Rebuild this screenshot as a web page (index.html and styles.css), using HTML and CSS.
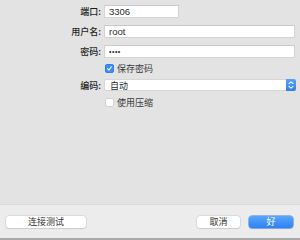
FILE: index.html
```html
<!DOCTYPE html>
<html lang="zh-CN">
<head>
    <meta charset="UTF-8">
    <title>连接设置</title>
    <link rel="stylesheet" href="styles.css">
</head>
<body>
    <div class="sheet">
        <div class="form">
            <div class="row row-port">
                <label class="label">端口:</label>
                <input class="field field-short" type="text" value="3306">
            </div>
            <div class="row">
                <label class="label">用户名:</label>
                <input class="field" type="text" value="root">
            </div>
            <div class="row">
                <label class="label">密码:</label>
                <input class="field field-pass" type="text" value="••••">
            </div>
            <div class="row row-check">
                <span class="label"></span>
                <span class="check checked">
                    <svg viewBox="0 0 9 9" width="9" height="9"><path d="M2 4.6 L3.8 6.6 L7 2.2" fill="none" stroke="#fff" stroke-width="1.3" stroke-linecap="round" stroke-linejoin="round"/></svg>
                </span>
                <span class="check-text">保存密码</span>
            </div>
            <div class="row row-select">
                <label class="label">编码:</label>
                <div class="select">
                    <span class="select-value">自动</span>
                    <span class="stepper">
                        <svg viewBox="0 0 10 12" width="10" height="12"><path d="M3 4.6 L5 2.8 L7 4.6 M3 7.4 L5 9.2 L7 7.4" fill="none" stroke="#fff" stroke-width="1.1" stroke-linecap="round" stroke-linejoin="round"/></svg>
                    </span>
                </div>
            </div>
            <div class="row row-check row-check2">
                <span class="label"></span>
                <span class="check"></span>
                <span class="check-text">使用压缩</span>
            </div>
        </div>
        <div class="footer">
            <button class="btn btn-test">连接测试</button>
            <div class="footer-right">
                <button class="btn btn-cancel">取消</button>
                <button class="btn btn-ok">好</button>
            </div>
        </div>
    </div>
</body>
</html>
```
FILE: styles.css
```css
body {
    margin: 0;
    background-color: #e3e3e3;
    font-family: "Liberation Sans", "Noto Sans CJK SC", sans-serif;
    font-size: 10px;
    color: #2b2b2b;
}
.sheet {
    height: 240px;
    display: flex;
    flex-direction: column;
    box-sizing: border-box;
}
.form {
    flex: 1;
    padding-top: 5px;
    display: flex;
    flex-direction: column;
}
.row {
    display: flex;
    align-items: center;
    height: 13px;
    margin-bottom: 7px;
}
.label {
    width: 101px;
    padding-right: 3px;
    text-align: right;
    flex-shrink: 0;
    font-family: "Noto Sans CJK SC", sans-serif;
    font-size: 9px;
    font-weight: 500;
    color: #1e1e1e;
}
.field {
    box-sizing: border-box;
    width: 191px;
    height: 13px;
    margin: 0;
    padding: 0 4px;
    border: 1px solid #d4d4d4;
    border-top-color: #c8c8c8;
    background: #fff;
    font-family: "Liberation Sans", sans-serif;
    font-size: 9.5px;
    color: #2b2b2b;
    outline: none;
}
.field-short {
    width: 75px;
}
.field-pass {
    font-size: 7px;
    letter-spacing: 0.5px;
}
.row-check {
    height: 9px;
    margin-top: -1px;
    margin-bottom: 6px;
}
.check {
    box-sizing: border-box;
    width: 9px;
    height: 9px;
    margin-left: 1px;
    border-radius: 2px;
    background: #fff;
    border: 1px solid #d2d2d2;
    display: flex;
    align-items: center;
    justify-content: center;
}
.check.checked {
    background: #3b8cf6;
    border-color: #3380ee;
}
.check svg {
    display: block;
}
.check-text {
    margin-left: 3px;
    font-family: "Noto Sans CJK SC", sans-serif;
    font-size: 9px;
    color: #3a3a3a;
}
.row-select {
    height: 12px;
    margin-bottom: 8px;
}
.select {
    box-sizing: border-box;
    width: 192px;
    height: 12px;
    display: flex;
    align-items: center;
    background: #fff;
    border: 1px solid #d6d6d6;
    border-right: none;
    border-radius: 2px;
}
.select-value {
    flex: 1;
    padding-left: 5px;
    font-family: "Noto Sans CJK SC", sans-serif;
    font-size: 9px;
    color: #2b2b2b;
}
.stepper {
    width: 10px;
    height: 12px;
    margin-top: -1px;
    margin-bottom: -1px;
    background: linear-gradient(#57a2fb, #2f7ff1);
    border-radius: 0 2px 2px 0;
    display: flex;
}
.stepper svg {
    display: block;
}
.footer {
    height: 33px;
    background: #ececec;
    border-top: 1px solid #dadada;
    border-bottom: 2px solid #a9a9a9;
    display: flex;
    align-items: center;
    justify-content: space-between;
    padding: 0 7px 0 6px;
}
.footer-right {
    display: flex;
    gap: 9px;
}
.btn {
    box-sizing: border-box;
    height: 12px;
    margin: 0;
    padding: 0;
    border: none;
    border-radius: 3px;
    background: #fff;
    box-shadow: 0 0 0 0.5px #c9c9c9, 0 1px 1px rgba(0, 0, 0, 0.12);
    font-family: "Noto Sans CJK SC", sans-serif;
    font-size: 9px;
    color: #333;
    line-height: 12px;
}
.btn-test {
    width: 80px;
}
.btn-cancel {
    width: 43px;
}
.btn-ok {
    width: 44px;
    background: linear-gradient(#5aa5fb, #2f80f3);
    color: #fff;
    box-shadow: 0 0 0 0.5px #2f7cea, 0 1px 1px rgba(0, 0, 0, 0.12);
}
```
